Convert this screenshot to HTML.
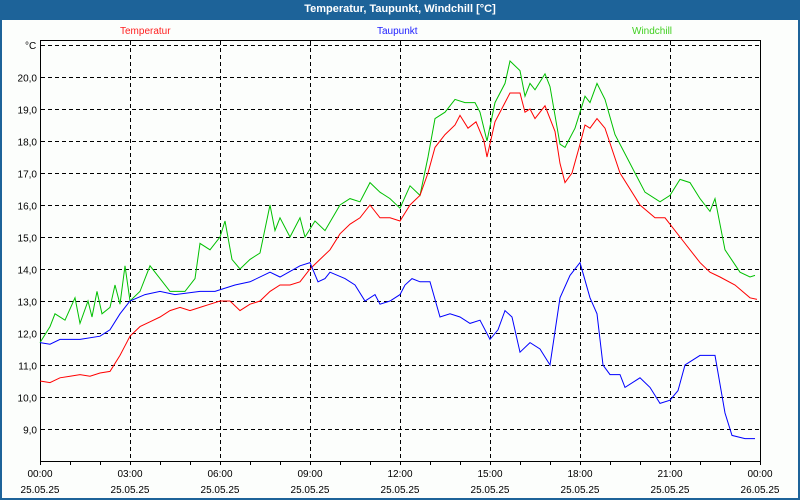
<!DOCTYPE html>
<html><head><meta charset="utf-8"><style>
body{margin:0;width:800px;height:500px;overflow:hidden;background:#1d6399;font-family:"Liberation Sans",sans-serif}
#w{position:absolute;left:2px;top:20px;width:796px;height:478px;background:#fcfefc}
#t{position:absolute;left:0;top:0;width:800px;height:20px;line-height:18px;text-align:center;color:#fff;font-weight:bold;font-size:11px}
</style></head><body>
<div id="t">Temperatur, Taupunkt, Windchill [°C]</div>
<div id="w"></div>
<svg id="s" width="800" height="500" style="position:absolute;left:0;top:0" font-family="Liberation Sans, sans-serif" font-size="10">
<text x="120" y="34" fill="#ff2020">Temperatur</text>
<text x="377" y="34" fill="#2020ff">Taupunkt</text>
<text x="632" y="34" fill="#40d020">Windchill</text>
<text x="25" y="49" fill="#000">°C</text>
<g id="grid" stroke="#000" stroke-dasharray="4,3" stroke-width="1"></g>
<g id="lab" fill="#000" text-anchor="end"></g>
<g id="xl" fill="#000" text-anchor="middle"></g>
<rect x="40.5" y="40.5" width="720" height="421" fill="none" stroke="#000"/>
<polyline id="g" fill="none" stroke="#00c000" stroke-width="1"/>
<polyline id="r" fill="none" stroke="#ff0000" stroke-width="1"/>
<polyline id="b" fill="none" stroke="#0000ff" stroke-width="1"/>
</svg>
<script>
var NS="http://www.w3.org/2000/svg";
function el(p,n,a,t){var e=document.createElementNS(NS,n);for(var k in a)e.setAttribute(k,a[k]);if(t)e.textContent=t;document.getElementById(p).appendChild(e);}
for(var T=21;T>=9;T--){var y=45+(21-T)*32+0.5;el("grid","line",{x1:41,x2:760,y1:y,y2:y});if(T<21)el("lab","text",{x:37,y:y+4},T+",0");}
for(var h=3;h<24;h+=3){var x=40+h*30+0.5;el("grid","line",{x1:x,x2:x,y1:41,y2:461});}
for(var h=0;h<=24;h++){var x=40+h*30+0.5;el("grid","line",{x1:x,x2:x,y1:462,y2:465,"stroke-dasharray":"none"});}
for(var h=0;h<=24;h+=3){var x=40+h*30;var hh=(h%24<10?"0":"")+(h%24)+":00";el("xl","text",{x:x,y:477},hh);el("xl","text",{x:x,y:493},h==24?"26.05.25":"25.05.25");}
function pts(a){var s=[];for(var i=0;i<a.length;i+=2)s.push(a[i]+","+(45+(21-a[i+1])*32));return s.join(" ");}
var R=[40,10.5,50,10.45,60,10.6,70,10.65,80,10.7,90,10.65,100,10.75,110,10.8,120,11.3,125,11.6,130,11.9,140,12.2,150,12.35,160,12.5,170,12.7,180,12.8,190,12.7,200,12.8,210,12.9,220,13.0,230,13.0,240,12.7,250,12.9,260,13.0,270,13.3,280,13.5,290,13.5,300,13.6,310,14.0,320,14.3,330,14.6,340,15.1,350,15.4,360,15.6,370,16.0,380,15.6,390,15.6,400,15.5,410,16.0,420,16.3,428,17.0,435,17.8,445,18.2,455,18.5,460,18.8,468,18.4,476,18.6,484,18.0,487,17.5,495,18.6,505,19.2,510,19.5,520,19.5,525,18.9,530,19.0,535,18.7,545,19.1,555,18.3,560,17.3,565,16.7,572,17.0,580,17.9,585,18.5,590,18.4,597,18.7,605,18.4,620,17.0,640,16.0,655,15.6,665,15.6,680,15.0,700,14.2,710,13.9,720,13.75,735,13.5,750,13.1,757,13.05];
var G=[40,11.7,50,12.2,55,12.6,65,12.4,75,13.1,80,12.3,88,13.0,92,12.5,97,13.3,102,12.6,110,12.8,115,13.5,120,12.9,125,14.1,130,13.0,140,13.3,150,14.1,160,13.7,170,13.3,185,13.3,195,13.7,200,14.8,210,14.6,220,15.0,225,15.5,232,14.3,240,14.0,250,14.3,260,14.5,270,16.0,275,15.2,280,15.6,290,15.0,300,15.6,305,15.0,315,15.5,325,15.2,340,16.0,350,16.2,360,16.1,370,16.7,380,16.4,390,16.2,400,15.9,410,16.6,420,16.3,428,17.5,435,18.7,445,18.9,455,19.3,465,19.2,475,19.2,480,18.9,487,18.0,495,19.2,505,19.8,510,20.5,520,20.2,525,19.4,530,19.8,535,19.6,545,20.1,550,19.7,560,17.9,565,17.8,575,18.4,585,19.4,590,19.2,597,19.8,605,19.3,615,18.2,630,17.3,645,16.4,660,16.1,670,16.3,680,16.8,690,16.7,700,16.2,705,16.0,710,15.8,715,16.2,725,14.6,740,13.9,750,13.75,755,13.8];
var B=[40,11.7,50,11.65,60,11.8,80,11.8,100,11.9,110,12.1,120,12.6,130,13.0,145,13.2,160,13.3,175,13.2,200,13.3,215,13.3,235,13.5,250,13.6,270,13.9,280,13.75,300,14.1,310,14.2,318,13.6,325,13.7,330,13.9,345,13.7,355,13.5,365,13.0,375,13.2,380,12.9,390,13.0,400,13.2,405,13.5,412,13.7,420,13.6,430,13.6,440,12.5,450,12.6,460,12.5,470,12.3,480,12.4,490,11.8,498,12.1,505,12.7,512,12.5,520,11.4,530,11.7,540,11.5,550,11.0,560,13.1,570,13.8,580,14.2,590,13.1,597,12.6,603,11.0,610,10.7,620,10.7,625,10.3,640,10.6,650,10.3,660,9.8,670,9.9,678,10.2,685,11.0,700,11.3,715,11.3,725,9.5,732,8.8,745,8.7,755,8.7];
document.getElementById("r").setAttribute("points",pts(R));
document.getElementById("g").setAttribute("points",pts(G));
document.getElementById("b").setAttribute("points",pts(B));
</script>
</body></html>
